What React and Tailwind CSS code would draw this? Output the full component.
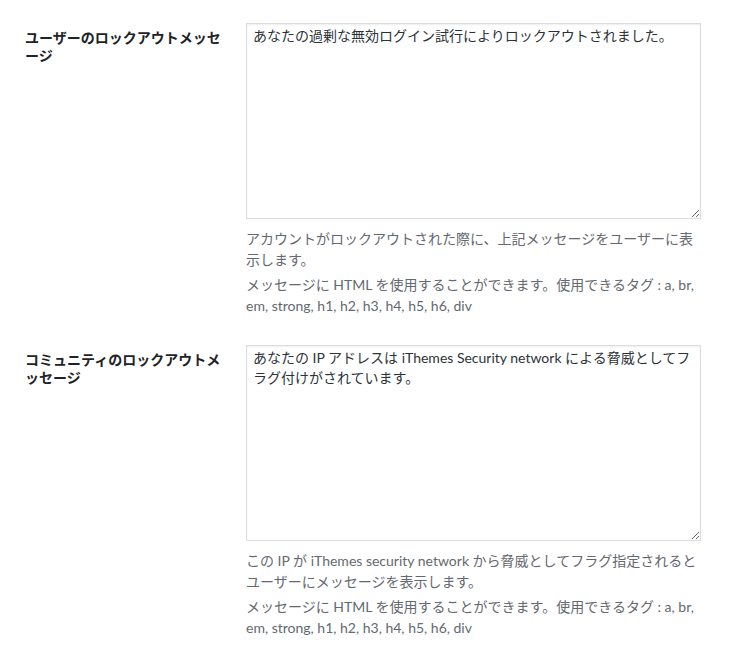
import React from "react";

const rows = [
  {
    label: "ユーザーのロックアウトメッセージ",
    value: "あなたの過剰な無効ログイン試行によりロックアウトされました。",
    help: "アカウントがロックアウトされた際に、上記メッセージをユーザーに表示します。",
  },
  {
    label: "コミュニティのロックアウトメッセージ",
    value:
      "あなたの IP アドレスは iThemes Security network による脅威としてフラグ付けがされています。",
    help: "この IP が iThemes security network から脅威としてフラグ指定されるとユーザーにメッセージを表示します。",
  },
];

const tags =
  "メッセージに HTML を使用することができます。使用できるタグ : a, br, em, strong, h1, h2, h3, h4, h5, h6, div";

function SettingRow({ label, value, help }) {
  return (
    <div className="flex mb-[29px]">
      <div className="w-[221px] shrink-0">
        <div className="w-[200px] mt-[6px] text-[14px] leading-[18px] font-semibold text-[#1d2327]">
          {label}
        </div>
      </div>
      <div className="w-[455px]">
        <textarea
          defaultValue={value}
          className="block w-[455px] h-[196px] px-[6px] py-[2px] text-[14px] leading-[20px] text-[#2c3338] bg-white border border-[#dddddd] rounded-none shadow-[inset_0_1px_2px_rgba(0,0,0,0.07)] outline-none"
        />
        <p className="mt-[9px] text-[14px] leading-[21px] text-[#646970]">{help}</p>
        <p className="mt-[4px] text-[14px] leading-[21px] text-[#646970]">{tags}</p>
      </div>
    </div>
  );
}

export default function App() {
  return (
    <div
      className="min-h-screen bg-white pt-[23px] pl-[25px]"
      style={{ fontFamily: '"Lato", "Noto Sans CJK JP", sans-serif' }}
    >
      {rows.map((r) => (
        <SettingRow key={r.label} {...r} />
      ))}
    </div>
  );
}
